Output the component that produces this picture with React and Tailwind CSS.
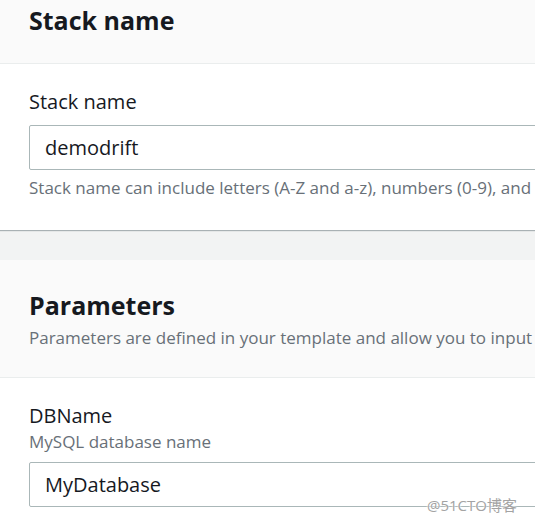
import React from 'react';

const font = { fontFamily: '"Open Sans", "Noto Sans", "Noto Sans CJK SC", sans-serif' };

const App = () => {
  return (
    <div className="relative w-[535px] h-[523px] overflow-hidden bg-[#f2f3f3] text-[#16191f]" style={font}>
      {/* Stack name card */}
      <div className="bg-white shadow-[0_1px_1px_0_rgba(0,28,36,0.3)]">
        <div className="h-[64px] bg-[#fafafa] border-b border-[#eaeded] px-[29px] pt-[3px]">
          <h2 className="text-[25px] font-bold leading-[34px]">Stack name</h2>
        </div>
        <div className="px-[29px] pt-[24px] pb-[30px]">
          <div className="text-[20px] leading-[28px]">Stack name</div>
          <div className="mt-[9px] h-[45px] w-[560px] border border-[#aab7b8] rounded-[2px] flex items-center px-[15px] text-[20px]">
            demodrift
          </div>
          <div className="mt-[6px] text-[17px] leading-[24px] text-[#687078] whitespace-nowrap">
            Stack name can include letters (A-Z and a-z), numbers (0-9), and dashes (-).
          </div>
        </div>
      </div>

      {/* Parameters card */}
      <div className="mt-[30px] bg-white shadow-[0_1px_1px_0_rgba(0,28,36,0.3)]">
        <div className="h-[118px] bg-[#fafafa] border-b border-[#eaeded] px-[29px] pt-[28px]">
          <h2 className="text-[25px] font-bold leading-[34px]">Parameters</h2>
          <div className="mt-[4px] text-[17px] leading-[24px] text-[#687078] whitespace-nowrap">
            Parameters are defined in your template and allow you to input custom values when you create or update a stack.
          </div>
        </div>
        <div className="px-[29px] pt-[24px] pb-[20px]">
          <div className="text-[20px] leading-[28px]">DBName</div>
          <div className="text-[17px] leading-[24px] text-[#687078]">MySQL database name</div>
          <div className="mt-[8px] h-[45px] w-[560px] border border-[#aab7b8] rounded-[2px] flex items-center px-[15px] text-[20px]">
            MyDatabase
          </div>
        </div>
      </div>

      <div className="absolute left-[427px] top-[494px] text-[15px] leading-[22px] text-[#a3a3a3] [text-shadow:0_0_2px_#fff,0_0_2px_#fff]">
        @51CTO博客
      </div>
    </div>
  );
};

export default App;
